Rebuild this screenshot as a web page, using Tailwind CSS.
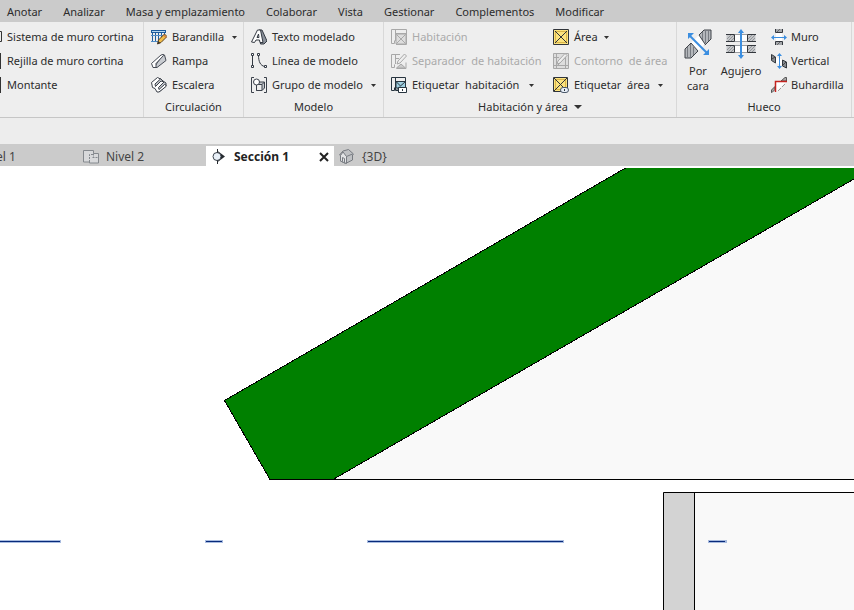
<!DOCTYPE html>
<html lang="es">
<head>
  <meta charset="UTF-8">
  <meta name="viewport" content="width=device-width, initial-scale=1.0">
  <title>Sección 1</title>
  <script src="https://cdn.jsdelivr.net/npm/@tailwindcss/browser@4"></script>
</head>
<body class="flex h-screen flex-col overflow-hidden bg-white font-['Noto_Sans',sans-serif] text-[11px] leading-4 text-[#2c2c2c]">

  <nav class="flex h-[22px] shrink-0 items-center gap-[21px] bg-[#cbcbcb] px-[7px] pt-[2px] whitespace-nowrap">
    <button>Anotar</button>
    <button>Analizar</button>
    <button>Masa y emplazamiento</button>
    <button>Colaborar</button>
    <button>Vista</button>
    <button>Gestionar</button>
    <button>Complementos</button>
    <button>Modificar</button>
  </nav>

  <!-- Ribbon -->
  <div class="flex h-24 shrink-0 border-b border-[#c6c6c6] bg-[#eee] whitespace-nowrap">

    <section class="flex w-36 shrink-0 flex-col border-r border-[#d8d8d8] pt-[3px]">
      <button class="flex h-6 items-center gap-[5px]">
        <svg class="h-4 w-[2px] shrink-0" viewBox="0 0 2 16" fill="none" stroke="#333"><path d="M0 2.500h1.500v10H0"/></svg>
        Sistema de muro cortina
      </button>
      <button class="flex h-6 items-center gap-[5px]">
        <svg class="h-4 w-[2px] shrink-0" viewBox="0 0 2 16"><path d="M0 0h1v16H0z" fill="#333"/></svg>
        Rejilla de muro cortina
      </button>
      <button class="flex h-6 items-center gap-[5px]">
        <svg class="h-4 w-[2px] shrink-0" viewBox="0 0 2 16"><path d="M0 0h1v16H0z" fill="#333"/></svg>
        Montante
      </button>
    </section>

    <section class="flex w-[100px] shrink-0 flex-col border-r border-[#d8d8d8] pt-[3px]">
      <button class="flex h-6 items-center gap-[5px] pl-[7px]">
        <svg class="size-4 shrink-0" viewBox="0 0 16 16" fill="none">
          <path d="M0 1h15v3H0z" fill="#1d5b9c"/><path d="M1 2.500h13" stroke="#b5d8f2"/>
          <path d="M1.500 4v9M4.500 4v9M7.500 4v8M10.500 4v5M13.500 4v2" stroke="#245f9b"/><path d="M0 6.500h14M0 12.500h7" stroke="#4f8dc8"/>
          <path d="M6.500 15l1-4 6-6 2.500 2.500-6 6z" fill="#f3bd48" stroke="#5b4020"/><path d="M6.500 15l.8-3 2 2z" fill="#333"/><path d="M12.500 6l2.500 2.500" stroke="#c9573c"/>
        </svg>
        Barandilla
        <svg class="ml-[3px] h-[3px] w-[5px]" viewBox="0 0 5 3"><path d="M0 0h5L2.500 3z" fill="#333"/></svg>
      </button>
      <button class="flex h-6 items-center gap-[5px] pl-[7px]">
        <svg class="size-4 shrink-0" viewBox="0 0 16 16" stroke="#464b55" stroke-linejoin="round">
          <path d="M12 1.500l1.500.5 1.500 5.500-9 7H3z" fill="#c9ccd1"/><path d="M.5 10.500L10 2l2-.5.5 1-7.500 8v4H2z" fill="#fff"/>
        </svg>
        Rampa
      </button>
      <button class="flex h-6 items-center gap-[5px] pl-[7px]">
        <svg class="size-4 shrink-0" viewBox="0 0 16 16" stroke="#3c414a" stroke-linejoin="round">
          <path d="M3.500 7.500l1 3 2.500 1 1 3.500 7-6V6L12 4 9.500 1.500z" fill="#c3c7cd"/>
          <path d="M.5 5.500L6.500.5 9.500 2 4 7l.5 2.500L10 4l3 1-5.500 5.500.5 2 5.500-5 1.500.5v1.500L8 15H6l-2-3.500-2.500-1z" fill="#fff"/>
        </svg>
        Escalera
      </button>
      <h2 class="flex h-5 items-center justify-center">Circulación</h2>
    </section>

    <section class="flex w-[140px] shrink-0 flex-col border-r border-[#d8d8d8] pt-[3px]">
      <button class="flex h-6 items-center gap-[5px] pl-[7px]">
        <svg class="size-4 shrink-0" viewBox="0 0 16 16" stroke="#343a43" stroke-linejoin="round">
          <path d="M8 1h3l5 11-3 3H9.500z" fill="#8c929b"/><path d="M.5 13L6.500 1h3l2.500 12.500H9l-.5-2.500H5l-1.500 2.500zM6 8.500h2L7.500 5z" fill="#fff"/>
        </svg>
        Texto modelado
      </button>
      <button class="flex h-6 items-center gap-[5px] pl-[7px]">
        <svg class="size-4 shrink-0" viewBox="0 0 16 16" fill="none" stroke="#333a44">
          <path d="M1.500 2v11M7.500 2c0 7 2 10.500 6 11.500"/><path d="M.5.5h2v2h-2zM.5 12.500h2v2h-2zM6.500.5h2v2h-2zM13.500 12.500h2v2h-2z" fill="#fff"/>
        </svg>
        Línea de modelo
      </button>
      <button class="flex h-6 items-center gap-[5px] pl-[7px]">
        <svg class="size-4 shrink-0" viewBox="0 0 16 16" fill="none" stroke="#3b414b">
          <path d="M3 .5H.5v15H3M13 .5h2.500v15H13"/><path d="M5.500 7.500L8 5h5.500v6L11 13.500H5.500z" fill="#c4c8cd"/><path d="M5.500 7.500h5.500v6H5.500z" fill="#eee"/><path d="M11 7.500L13.500 5"/><circle cx="5.500" cy="5" r="3" fill="#fff"/>
        </svg>
        Grupo de modelo
        <svg class="ml-[3px] h-[3px] w-[5px]" viewBox="0 0 5 3"><path d="M0 0h5L2.500 3z" fill="#333"/></svg>
      </button>
      <h2 class="flex h-5 items-center justify-center">Modelo</h2>
    </section>

    <section class="flex w-[293px] shrink-0 flex-col border-r border-[#d8d8d8] pt-[3px]">
      <div class="grid grid-cols-[162px_1fr] whitespace-pre">
        <button class="flex h-6 items-center gap-[5px] pl-[7px] text-[#aaa]" disabled><svg class="size-4 shrink-0" viewBox="0 0 16 16" fill="none" stroke="#a8a8a8">
            <path d="M.5.5h15v15H5M.5.5v14h3v-3M4.500 1v11M5 4.500h10"/><path d="M5 5h10v10H5z" fill="#ddd"/><path d="M5.500 5.500l9 9M14.500 5.500l-9 9"/>
          </svg>Habitación</button>
        <button class="flex h-6 items-center gap-[5px] pl-[7px]"><svg class="size-4 shrink-0" viewBox="0 0 16 16" fill="none" stroke="#30343a">
            <path d="M.5.500h15v15H.5z" fill="#fce37e"/><path d="M2.500 2.500h11v11h-11z" stroke="#d9b54a"/><path d="M2 2l12 12M14 2L2 14"/>
          </svg>Área<svg class="ml-[1px] h-[3px] w-[5px]" viewBox="0 0 5 3"><path d="M0 0h5L2.500 3z" fill="#333"/></svg></button>
        <button class="flex h-6 items-center gap-[5px] pl-[7px] text-[#aaa]" disabled><svg class="size-4 shrink-0" viewBox="0 0 16 16" fill="none" stroke="#a8a8a8">
            <path d="M9 1.500H.5v13h3v-3M4.500 2v9M5 5.500h3M5.500 15.500h9.500v-6"/><path d="M5.500 15l4.500-4 4.500 4z" fill="#ccc"/><path d="M6 11l1-3 6.500-7 2 2-6.500 7z" fill="#eee"/>
          </svg>Separador  de habitación</button>
        <button class="flex h-6 items-center gap-[5px] pl-[7px] text-[#aaa]" disabled><svg class="size-4 shrink-0" viewBox="0 0 16 16" fill="none" stroke="#a8a8a8">
            <path d="M.5.5h15v15H.5z" fill="#ddd"/><path d="M1 4.500h5M3.500 1v14M1 12.500h14M12.500 5v10M4 13l9-9"/><path d="M4 11l1-3 7-7.500 2 2L7 10z" fill="#eee"/>
          </svg>Contorno  de área</button>
        <button class="flex h-6 items-center gap-[5px] pl-[7px]"><svg class="size-4 shrink-0" viewBox="0 0 16 16" fill="none" stroke="#27343f">
            <path d="M.5.5h14v10M.5.5v13h3v-3M4.500 1v12.500H7"/><path d="M5 4.500h9.500V11H5z" fill="#9fcfe0"/><path d="M5 4.500l4.500 4.500 5-4.500M5.500 13L9 9.500"/><path d="M7.500 10.500h8v5h-8z" fill="#fff"/><path d="M11.500 12v2"/>
          </svg>Etiquetar  habitación<svg class="ml-[5px] h-[3px] w-[5px]" viewBox="0 0 5 3"><path d="M0 0h5L2.500 3z" fill="#333"/></svg></button>
        <button class="flex h-6 items-center gap-[5px] pl-[7px]"><svg class="size-4 shrink-0" viewBox="0 0 16 16" fill="none" stroke="#30343a">
            <path d="M.5.5h14v14H.5z" fill="#fce37e"/><path d="M2.500 2.500h10v10h-10z" stroke="#d9b54a"/><path d="M1 1l12 12M14 1L1 14"/><rect x="7.500" y="10.500" width="8" height="5" rx="2.500" fill="#e7eff8" stroke="#4b596b"/><path d="M11.500 12v2"/>
          </svg>Etiquetar  área<svg class="ml-[3px] h-[3px] w-[5px]" viewBox="0 0 5 3"><path d="M0 0h5L2.500 3z" fill="#333"/></svg></button>
      </div>
      <button class="flex h-5 items-center justify-center gap-[6px]">Habitación y área
        <svg class="h-1 w-2" viewBox="0 0 8 4"><path d="M0 0h8L4 4z" fill="#333"/></svg>
      </button>
    </section>

    <section class="flex w-[175px] shrink-0 flex-col border-r border-[#d8d8d8] pt-[3px]">
      <div class="flex h-[72px]">
        <button class="flex w-[42px] shrink-0 flex-col items-center pt-1 leading-[15px]">
          <svg class="mb-1 h-[30px] w-7 shrink-0" viewBox="0 0 28 30" fill="none">
            <path d="M20 1h7v9l-7 7-5-11z" fill="#b4b7bb"/><path d="M1 29v-9l6-6 7 8-7 7z" fill="#b4b7bb"/>
            <path d="M7 14l8-8 6 9-7 7z" fill="#fff"/>
            <path d="M15 6l5-5h7v9l-6 6" stroke="#3e4248"/><path d="M18.500 3v8M21.500 1v13M24.500 1v11" stroke="#777b81"/>
            <path d="M7 14l-6 6v9h6l7-7M7 14l7 8M15 6l6 9" stroke="#3e4248"/><path d="M3.500 18v11M6.500 15v14M9.500 18v8" stroke="#777b81"/>
            <path d="M6 7l17 17" stroke="#3b8ee0" stroke-width="2"/><path d="M4 4h6l-6 6zM25 26h-6l6-6z" fill="#3b8ee0"/>
          </svg>
          <span>Por</span><span>cara</span>
        </button>
        <button class="flex w-[44px] shrink-0 flex-col items-center pt-1 leading-[15px]">
          <svg class="mb-1 h-[30px] w-[30px] shrink-0" viewBox="0 0 30 30" fill="none">
            <path d="M9 5h12v8H9zM9 16h12v8H9z" fill="#fff"/><path d="M9 5.500h12M9 12.500h12M9 16.500h12M9 23.500h12" stroke="#9a9da1"/>
            <path d="M.5 5.500h8v7h-8zM21.500 5.500h8v7h-8zM.5 16.500h8v7h-8zM21.500 16.500h8v7h-8z" fill="#c4c6c9"/>
            <path d="M1 10l4-4M2 12l6-6M5 12l3-3M22 10l4-4M23 12l6-6M26 12l3-3M1 21l4-4M2 23l6-6M5 23l3-3M22 21l4-4M23 23l6-6M26 23l3-3" stroke="#929599"/>
            <path d="M0 5.500h8.500v7H0M30 5.500h-8.500v7H30M0 16.500h8.500v7H0M30 16.500h-8.500v7H30" stroke="#33373d"/>
            <path d="M15 2v26" stroke="#3b8ee0" stroke-width="2"/><path d="M12 4l3-4 3 4zM12 26l3 4 3-4z" fill="#3b8ee0"/>
          </svg>
          <span>Agujero</span>
        </button>
        <div class="flex flex-col pl-2">
          <button class="flex h-6 items-center gap-1">
            <svg class="size-4 shrink-0" viewBox="0 0 16 16" fill="none">
              <path d="M5 4h6v9H5z" fill="#fff"/><path d="M5 0h6v4H5zM5 12h6v4H5z" fill="#a5a8ac"/><path d="M4.500 0v3.500h7V0M4.500 16v-3.500h7V16" stroke="#34383e"/><path d="M6 3l3-3M6 16l3-3" stroke="#666"/>
              <path d="M1 8.500h14" stroke="#3b8ee0"/><path d="M0 8.500l3-2.500v5zM16 8.500L13 6v5z" fill="#3b8ee0"/>
            </svg>
            Muro
          </button>
          <button class="flex h-6 items-center gap-1">
            <svg class="size-4 shrink-0" viewBox="0 0 16 16" fill="none">
              <path d="M5 4l7 3v6l-7-3z" fill="#fff"/><path d="M.5 1.500l4 2.500v6l-4-2.500zM11.500 7l4 2v6l-4-2z" fill="#888c91" stroke="#34383e"/><path d="M1 6l3-2M12 12l3-3" stroke="#444"/>
              <path d="M8.500 1v14" stroke="#3b8ee0"/><path d="M8.500 0L6 3h5zM8.500 16L6 13h5z" fill="#3b8ee0"/>
            </svg>
            Vertical
          </button>
          <button class="flex h-6 items-center gap-1">
            <svg class="size-4 shrink-0" viewBox="0 0 16 16" fill="none">
              <path d="M5 5h10L5 15z" fill="#fff"/><path d="M10 4l4-3.500h1.500V4zM.5 15.500V13L4 9.500v3l-3 3z" fill="#aaa" stroke="#555"/><path d="M7 14l3-3M11 10l3-3" stroke="#999"/><path d="M4.500 15V4.500H16" stroke="#c4231f" stroke-width="1.500"/>
            </svg>
            Buhardilla
          </button>
        </div>
      </div>
      <h2 class="flex h-5 items-center justify-center">Hueco</h2>
    </section>
  </div>

  <div class="h-[26px] shrink-0 bg-[#ededed]"></div>

  <!-- View tabs -->
  <div class="flex h-[22px] shrink-0 items-end bg-[#cbcbcb] text-[12px] whitespace-nowrap text-[#444]">
    <button class="flex h-5 w-[83px] items-center pt-px"><span class="-ml-1">el 1</span></button>
    <button class="flex h-5 w-[123px] items-center gap-[7px] pt-px">
      <svg class="size-4 shrink-0" viewBox="0 0 16 16" fill="none" stroke="#85898e">
        <path d="M.5 1.500h10v3h5v9.500h-9v-1h-6z" fill="#d8d9db"/><path d="M6.500 13V5.500h4" stroke-dasharray="2 1"/><path d="M9.500 8.500h6M10.500 4.500v4" stroke-dasharray="2 1"/>
      </svg>
      Nivel 2
    </button>
    <div class="flex h-5 w-32 items-center bg-white pt-px pl-[5px] text-[#222]">
      <button class="flex items-center gap-2 font-bold">
        <svg class="h-4 w-[15px] shrink-0" viewBox="0 0 15 16">
          <path d="M6 1.500l8 6-8 6z" fill="#25292e"/><circle cx="6" cy="7.500" r="4" fill="#e9f0f8" stroke="#3c434c"/><path d="M6.500 0v3.500M6.500 11.500V15" stroke="#25292e"/>
        </svg>
        Sección 1
      </button>
      <button class="mr-[5px] ml-auto" aria-label="Cerrar">
        <svg class="size-[10px]" viewBox="0 0 10 10" stroke="#222" stroke-width="2"><path d="M1 1l8 8M9 1L1 9"/></svg>
      </button>
    </div>
    <button class="flex h-5 items-center gap-2 pt-px pl-[5px]">
      <svg class="h-4 w-[15px] shrink-0" viewBox="0 0 15 16" stroke="#777b81" stroke-linejoin="round">
        <path d="M.5 6l3.500-4L9.500.5l5 4.500-1 1v5l-7 3.500L1.500 12V6z" fill="#bfc1c4"/><path d="M1.500 6.500L4 3l3.500 4.500v7l-6-2.500z" fill="#e2e3e5"/><path d="M7.500 7.500l6-2.500M3.500 12.500v-4l2 1v4" fill="none"/>
      </svg>
      {3D}
    </button>
  </div>

  <!-- Section view -->
  <main class="min-h-0 flex-1">
    <svg class="block size-full" viewBox="0 166 854 444" preserveAspectRatio="xMinYMin slice" role="img" aria-label="Vista de sección">
      <path d="M333 479.500L854 179v300.500z" fill="#f9f9f9"/>
      <path d="M625.500 168H854v11L333 479.500h-63L224.500 400.500z" fill="#008000"/>
      <path d="M625.500 168L224.500 400.500 270 479.500M333 479.500L854 179" fill="none" stroke="#000" shape-rendering="crispEdges"/>
      <path d="M269 479.500h585" stroke="#000"/>
      <path d="M694 492h160v118H694z" fill="#f9f9f9"/>
      <path d="M663 492h31v118h-31z" fill="#d3d3d3"/>
      <path d="M663.500 610V492.500H854M694.500 492v118" fill="none" stroke="#000"/>
      <path d="M0 541.500h61M205 541.500h18M367 541.500h197M708 541.500h19" stroke="#6f8fcb" stroke-width="3" stroke-opacity=".6"/>
      <path d="M0 541.500h60M206 541.500h16M368 541.500h195M709 541.500h16" stroke="#082a7b"/>
    </svg>
  </main>
</body>
</html>
